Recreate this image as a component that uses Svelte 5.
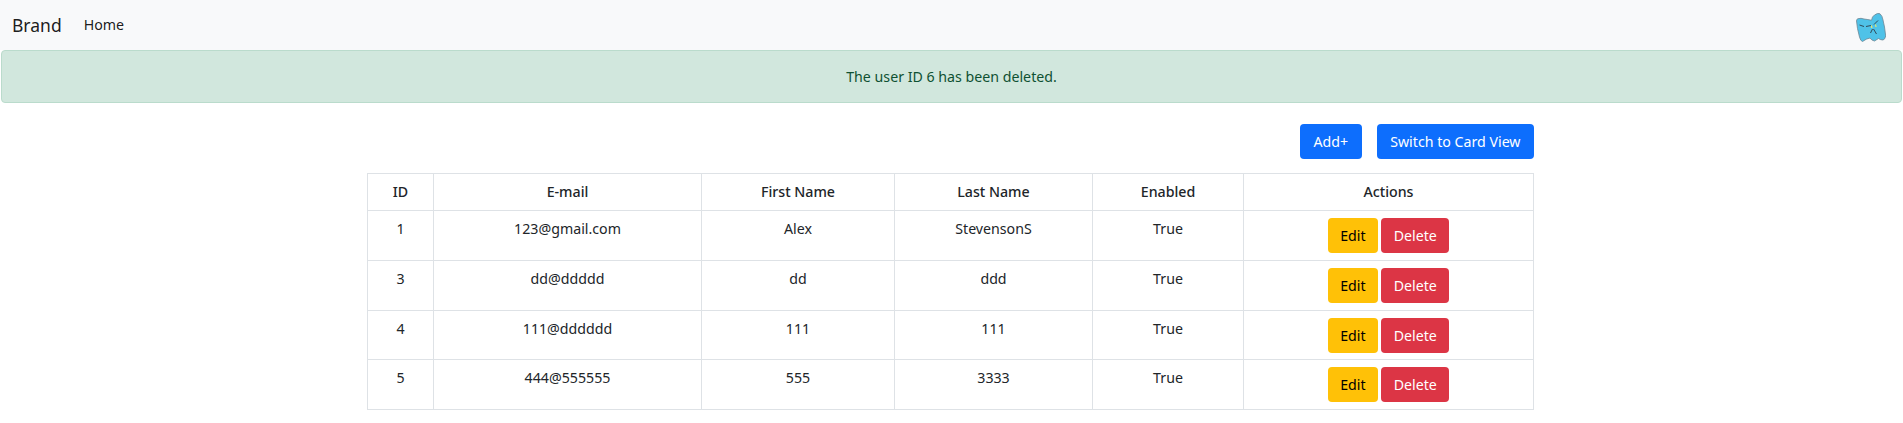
<script>
	let users = [
		{ id: 1, email: '123@gmail.com', first: 'Alex', last: 'StevensonS', enabled: 'True' },
		{ id: 3, email: 'dd@ddddd', first: 'dd', last: 'ddd', enabled: 'True' },
		{ id: 4, email: '111@dddddd', first: '111', last: '111', enabled: 'True' },
		{ id: 5, email: '444@555555', first: '555', last: '3333', enabled: 'True' }
	];
</script>

<nav class="navbar">
	<a class="brand" href="#top">Brand</a>
	<a class="nav-link" href="#top">Home</a>
	<svg class="logo" viewBox="0 0 30 29" width="30" height="29" aria-hidden="true">
		<path d="M0.500 8 Q0.500 6 2 5.700 Q5 4.800 8 6 Q12 6.500 15.500 7.300 Q16 3.500 18.500 2 Q22 -0.500 24 0.800 Q26.500 3 27 7 L28.500 14 L29.700 23 Q29 26.500 27 27 Q24.500 27 22.500 25.500 L18.500 28 Q15.500 27.500 14 25 Q10.500 25.500 6.500 28.500 Q4.500 28 3.500 24 Q1 15 0.500 8 Z" fill="#4fc2e8" stroke="#6d8794" stroke-width="0.800"/>
		<path d="M3.500 12 L8 13.500 M10 13.500 L15 12.500 M22 7.500 L18 11.500 M16.500 16 L14.500 20 M17.500 16 L20.500 21" fill="none" stroke="#2c3c47" stroke-width="0.900"/>
		<path d="M15.500 12.500 L15.800 15 M19.500 11.500 L20 14" stroke="#e9e46c" stroke-width="1.200"/>
	</svg>
</nav>

<div class="alert">The user ID 6 has been deleted.</div>

<main class="content">
	<div class="toolbar">
		<button class="btn primary">Add+</button>
		<button class="btn primary">Switch to Card View</button>
	</div>

	<table>
		<colgroup>
			<col style="width: 66px" />
			<col style="width: 268px" />
			<col style="width: 193px" />
			<col style="width: 198px" />
			<col style="width: 151px" />
			<col />
		</colgroup>
		<thead>
			<tr>
				<th>ID</th>
				<th>E-mail</th>
				<th>First Name</th>
				<th>Last Name</th>
				<th>Enabled</th>
				<th>Actions</th>
			</tr>
		</thead>
		<tbody>
			{#each users as user (user.id)}
				<tr>
					<td>{user.id}</td>
					<td>{user.email}</td>
					<td>{user.first}</td>
					<td>{user.last}</td>
					<td>{user.enabled}</td>
					<td class="actions">
						<button class="btn warning">Edit</button>
						<button class="btn danger">Delete</button>
					</td>
				</tr>
			{/each}
		</tbody>
	</table>
</main>

<style>
	:global(body) {
		margin: 0;
		font-family: "Noto Sans", sans-serif;
		font-size: 14.200px;
		line-height: 21px;
		color: #212529;
		background: #fff;
	}

	.navbar {
		display: flex;
		align-items: center;
		height: 50px;
		padding: 0 12px;
		background: #f8f9fa;
		box-sizing: border-box;
	}

	.brand {
		font-size: 17.500px;
		color: rgba(0, 0, 0, 0.9);
		text-decoration: none;
		margin-right: 22px;
	}

	.nav-link {
		color: rgba(0, 0, 0, 0.9);
		text-decoration: none;
		margin-bottom: 2px;
	}

	.logo {
		margin-left: auto;
		margin-right: 5px;
		margin-top: 4px;
		filter: blur(0.4px);
	}

	.alert {
		margin: 0 1px;
		height: 53px;
		box-sizing: border-box;
		display: flex;
		align-items: center;
		justify-content: center;
		background: #d1e7dd;
		border: 1px solid #badbcc;
		border-radius: 4px;
		color: #0f5132;
	}

	.content {
		width: 1167px;
		margin-left: 367px;
	}

	.toolbar {
		display: flex;
		justify-content: flex-end;
		gap: 15px;
		margin-top: 21px;
		margin-bottom: 14px;
	}

	.btn {
		font: inherit;
		height: 35px;
		padding: 0 11.500px;
		border: 1px solid transparent;
		border-radius: 4px;
	}

	.primary {
		padding: 0 12.500px;
		background: #0d6efd;
		color: #fff;
	}

	.warning {
		background: #ffc107;
		color: #000;
	}

	.danger {
		background: #dc3545;
		color: #fff;
	}

	table {
		width: 100%;
		table-layout: fixed;
		border-collapse: collapse;
		text-align: center;
	}

	th,
	td {
		border: 1px solid #dee2e6;
		padding: 7px;
		vertical-align: top;
	}

	th {
		font-weight: 500;
		padding-bottom: 8px;
	}

	/* the reference's third row is a pixel shorter */
	tbody tr:nth-child(3) td {
		padding-bottom: 6px;
	}

	.actions {
		font-size: 0;
		line-height: 0;
	}

	.actions .btn {
		font-size: 14.200px;
		line-height: 21px;
		margin: 0 1.500px;
	}
</style>
